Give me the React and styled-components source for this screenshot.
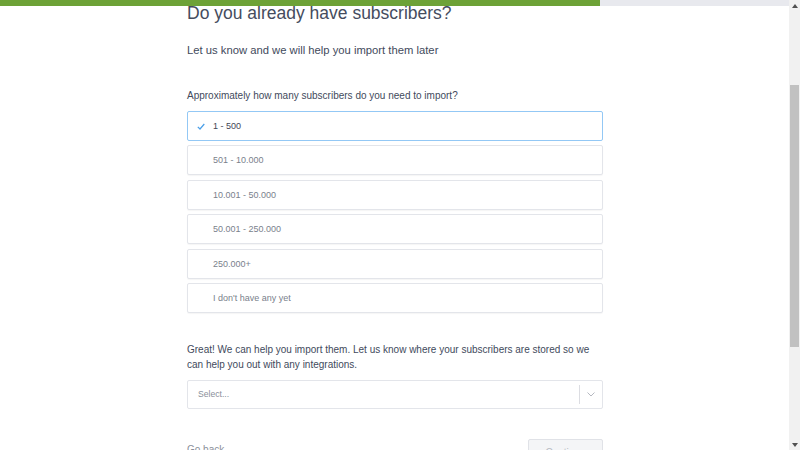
import React from "react";
import styled, { createGlobalStyle } from "styled-components";

const Global = createGlobalStyle`
  html, body { margin: 0; padding: 0; background: #fff; overflow: hidden; }
  body { font-family: "Liberation Sans", Arial, sans-serif; }
`;

const Progress = styled.div`
  position: fixed;
  top: 0;
  left: 0;
  right: 11px;
  height: 6px;
  background: #e8e9ee;
  z-index: 5;
`;
const ProgressFill = styled.div`
  height: 100%;
  background: #6da237;
`;

const Scrollbar = styled.div`
  position: fixed;
  top: 0;
  right: 0;
  width: 11px;
  height: 100%;
  background: #f1f1f1;
  display: flex;
  flex-direction: column;
  align-items: center;
  z-index: 6;
`;
const Arrow = styled.div`
  height: 11px;
  display: flex;
  align-items: center;
  justify-content: center;
`;
const Track = styled.div`
  flex: 1;
  width: 100%;
  display: flex;
  flex-direction: column;
  padding: 74px 1px 92px;
  box-sizing: border-box;
`;
const Thumb = styled.div`
  flex: 1;
  background: #c1c1c1;
`;

const Page = styled.main`
  width: 416px;
  margin: 0 0 0 187px;
  padding-top: 1px;
  color: #424a5c;
`;

const Title = styled.h1`
  margin: 0;
  font-size: 17.5px;
  font-weight: 400;
  line-height: 24px;
  color: #454c5e;
`;
const Subtitle = styled.p`
  margin: 16px 0 0;
  font-size: 11.25px;
  line-height: 18px;
`;
const Question = styled.p`
  margin: 28px 0 6px;
  font-size: 10px;
  line-height: 18px;
`;
const Options = styled.div`
  display: flex;
  flex-direction: column;
  gap: 4.4px;
`;
const Option = styled.div`
  height: 30px;
  box-sizing: border-box;
  border: 1px solid ${(p) => (p.$selected ? "#93c8f5" : "#e3e5ea")};
  border-radius: 2px;
  box-shadow: ${(p) => (p.$selected ? "none" : "0 1px 1px rgba(0,0,0,0.04)")};
  display: flex;
  align-items: center;
  font-size: 9px;
  color: ${(p) => (p.$selected ? "#3f4656" : "#7a7f8c")};
  background: #fff;
`;
const Check = styled.span`
  width: 25px;
  box-sizing: border-box;
  padding-left: 9px;
  display: flex;
  align-items: center;
`;
const Paragraph = styled.p`
  margin: 29.5px 0 7.5px;
  font-size: 10px;
  line-height: 15px;
`;
const Select = styled.div`
  height: 29px;
  box-sizing: border-box;
  border: 1px solid #e3e5ea;
  border-radius: 2px;
  display: flex;
  align-items: center;
  font-size: 8.6px;
  color: #8a8f9a;
`;
const SelectText = styled.span`
  flex: 1;
  padding-left: 10px;
`;
const Divider = styled.span`
  width: 1px;
  height: 19px;
  background: #dcdde2;
`;
const Caret = styled.span`
  width: 22px;
  display: flex;
  justify-content: center;
`;
const Footer = styled.div`
  margin-top: 30px;
  display: flex;
  justify-content: space-between;
  align-items: flex-start;
`;
const Back = styled.span`
  font-size: 10px;
  color: #8a8f9a;
  margin-top: 5px;
`;
const Continue = styled.button`
  width: 75px;
  height: 28px;
  border: 1px solid #e0e2e7;
  border-radius: 2px;
  background: #f4f5f7;
  color: #b8bcc5;
  font-family: inherit;
  font-size: 10px;
`;

const options = ["1 - 500", "501 - 10.000", "10.001 - 50.000", "50.001 - 250.000", "250.000+", "I don't have any yet"];

export default function App() {
  return (
    <>
      <Global />
      <Progress>
        <ProgressFill style={{ width: "600px" }} />
      </Progress>
      <Scrollbar>
        <Arrow>
          <svg width="6" height="4" viewBox="0 0 6 4"><path d="M0 4 L3 0 L6 4Z" fill="#505050" /></svg>
        </Arrow>
        <Track><Thumb /></Track>
        <Arrow>
          <svg width="6" height="4" viewBox="0 0 6 4"><path d="M0 0 L3 4 L6 0Z" fill="#505050" /></svg>
        </Arrow>
      </Scrollbar>
      <Page>
        <Title>Do you already have subscribers?</Title>
        <Subtitle>Let us know and we will help you import them later</Subtitle>
        <Question>Approximately how many subscribers do you need to import?</Question>
        <Options>
          {options.map((o, i) => (
            <Option key={o} $selected={i === 0}>
              <Check>
                {i === 0 && (
                  <svg width="8" height="7" viewBox="0 0 8 7">
                    <path d="M0.8 3.8 L3 6 L7.3 1" fill="none" stroke="#4a9fe8" strokeWidth="1.2" />
                  </svg>
                )}
              </Check>
              {o}
            </Option>
          ))}
        </Options>
        <Paragraph>
          Great! We can help you import them. Let us know where your subscribers are stored so we can help you out with any integrations.
        </Paragraph>
        <Select>
          <SelectText>Select...</SelectText>
          <Divider />
          <Caret>
            <svg width="8" height="5" viewBox="0 0 8 5"><path d="M0.5 0.5 L4 4 L7.5 0.5" fill="none" stroke="#b5b8c0" strokeWidth="1" /></svg>
          </Caret>
        </Select>
        <Footer>
          <Back>Go back</Back>
          <Continue>Continue</Continue>
        </Footer>
      </Page>
    </>
  );
}
